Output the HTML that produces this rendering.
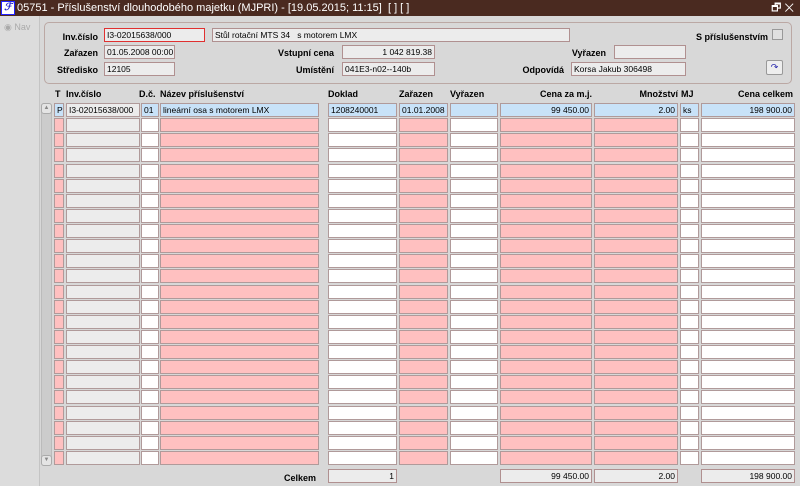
<!DOCTYPE html><html><head><meta charset="utf-8"><style>
*{margin:0;padding:0;box-sizing:border-box}
body{width:800px;height:486px;overflow:hidden;background:#d8d8d8;font-family:"Liberation Sans",sans-serif;font-size:9px;position:relative;color:#000}
.a{position:absolute}
.tb{left:0;top:0;width:800px;height:16px;background:#4a2a20;color:#fff;font-size:11px;line-height:16px;padding-left:17px}
.nav{left:0;top:16px;width:40px;height:470px;background:#dcdcdc;border-right:1px solid #c4c4c4}
.panel{left:44px;top:22px;width:748px;height:62px;border:1px solid #bba8a4;border-radius:5px}
.lb{font-weight:bold;text-align:right;line-height:12px}
.f{height:14px;border:1px solid #b09090;background:#ececec;line-height:12px;padding:0 2px;white-space:nowrap;overflow:hidden;font-size:8.5px}
.c{height:14px;border:1px solid #b09a9a;line-height:12px;padding:0 2px;white-space:nowrap;overflow:hidden;font-size:8.5px}
.w{background:#fff}.g{background:#ececec}.p{background:#ffc0c0}.b{background:#c8e2f8}
.r{text-align:right}
.h{font-weight:bold;top:89px;line-height:10px}
</style></head><body>
<div class="a tb">05751 - Příslušenství dlouhodobého majetku (MJPRI) - [19.05.2015; 11:15]&nbsp; [ ] [ ]<span style="position:absolute;right:6px;top:0">🗗 ✕</span></div>
<div class="a" style="left:1px;top:1px;width:14px;height:14px;background:#fff;border:1px solid #22f;color:#22c;font-weight:bold;font-style:italic;font-size:10px;line-height:12px;text-align:center">ℱ</div>
<div class="a nav"><span class="a" style="left:4px;top:6px;color:#aaa;font-size:9px">◉ Nav</span></div>
<div class="a panel"></div>
<div class="a lb" style="left:50px;top:31px;width:48px">Inv.číslo</div>
<div class="a f" style="left:104px;top:28px;width:101px;background:#ececec;border-color:#e03030">I3-02015638/000</div>
<div class="a f" style="left:212px;top:28px;width:358px">Stůl rotační MTS 34&nbsp;&nbsp; s motorem LMX</div>
<div class="a lb" style="left:600px;top:31px;width:168px">S příslušenstvím</div>
<div class="a" style="left:772px;top:29px;width:11px;height:11px;border:1px solid #999;background:#e0e0e0"></div>
<div class="a lb" style="left:50px;top:47px;width:48px">Zařazen</div>
<div class="a f" style="left:104px;top:45px;width:71px">01.05.2008 00:00</div>
<div class="a lb" style="left:260px;top:47px;width:74px">Vstupní cena</div>
<div class="a f r" style="left:342px;top:45px;width:93px">1 042 819.38</div>
<div class="a lb" style="left:540px;top:47px;width:66px">Vyřazen</div>
<div class="a f" style="left:614px;top:45px;width:72px"></div>
<div class="a lb" style="left:40px;top:64px;width:58px">Středisko</div>
<div class="a f" style="left:104px;top:62px;width:71px">12105</div>
<div class="a lb" style="left:260px;top:64px;width:74px">Umístění</div>
<div class="a f" style="left:342px;top:62px;width:93px">041E3-n02--140b</div>
<div class="a lb" style="left:500px;top:64px;width:64px">Odpovídá</div>
<div class="a f" style="left:571px;top:62px;width:115px">Korsa Jakub 306498</div>
<div class="a" style="left:766px;top:60px;width:17px;height:15px;border:1px solid #999;border-radius:2px;background:#eee;color:#22a;font-size:9px;text-align:center;line-height:12px">↷</div>
<div class="a h" style="left:55px">T</div>
<div class="a h" style="left:66px">Inv.číslo</div>
<div class="a h" style="left:139px">D.č.</div>
<div class="a h" style="left:160px">Název příslušenství</div>
<div class="a h" style="left:328px">Doklad</div>
<div class="a h" style="left:399px">Zařazen</div>
<div class="a h" style="left:450px">Vyřazen</div>
<div class="a h r" style="left:500px;width:92px">Cena za m.j.</div>
<div class="a h r" style="left:594px;width:84px">Množství</div>
<div class="a h" style="left:681px">MJ</div>
<div class="a h r" style="left:701px;width:92px">Cena celkem</div>
<div class="a" style="left:41px;top:103px;width:11px;height:363px;background:#ccc;border:1px solid #bbb;border-radius:3px"></div>
<div class="a" style="left:41px;top:103px;width:11px;height:11px;background:#e4e4e4;border:1px solid #aaa;border-radius:3px;font-size:6px;color:#888;text-align:center;line-height:9px">▲</div>
<div class="a" style="left:41px;top:455px;width:11px;height:11px;background:#e4e4e4;border:1px solid #aaa;border-radius:3px;font-size:6px;color:#888;text-align:center;line-height:9px">▼</div>
<div id="rows"></div>
<div class="a lb" style="left:260px;top:472px;width:56px">Celkem</div>
<div class="a f r" style="left:328px;top:469px;width:69px">1</div>
<div class="a f r" style="left:500px;top:469px;width:92px">99 450.00</div>
<div class="a f r" style="left:594px;top:469px;width:84px">2.00</div>
<div class="a f r" style="left:701px;top:469px;width:94px">198 900.00</div>
<script>
var cols=[[54,10,'p'],[66,74,'g'],[141,18,'w'],[160,159,'p'],[328,69,'w'],[399,49,'p'],[450,48,'w'],[500,92,'p'],[594,84,'p'],[680,19,'w'],[701,94,'w']];
var first=['P','I3-02015638/000','01','lineární osa s motorem LMX','1208240001','01.01.2008','','99 450.00','2.00','ks','198 900.00'];
var h='';
for(var i=0;i<24;i++){var y=Math.round(103+i*15.13);
for(var j=0;j<cols.length;j++){var c=cols[j];var cls=i==0?'b':c[2];if(i==0&&j==1)cls='g';var t=i==0?first[j]:'';var r=(i==0&&(j==7||j==8||j==10))?' r':'';
h+='<div class="a c '+cls+r+'" style="left:'+c[0]+'px;top:'+y+'px;width:'+c[1]+'px">'+t+'</div>';}}
document.getElementById('rows').innerHTML=h;
</script>
</body></html>
